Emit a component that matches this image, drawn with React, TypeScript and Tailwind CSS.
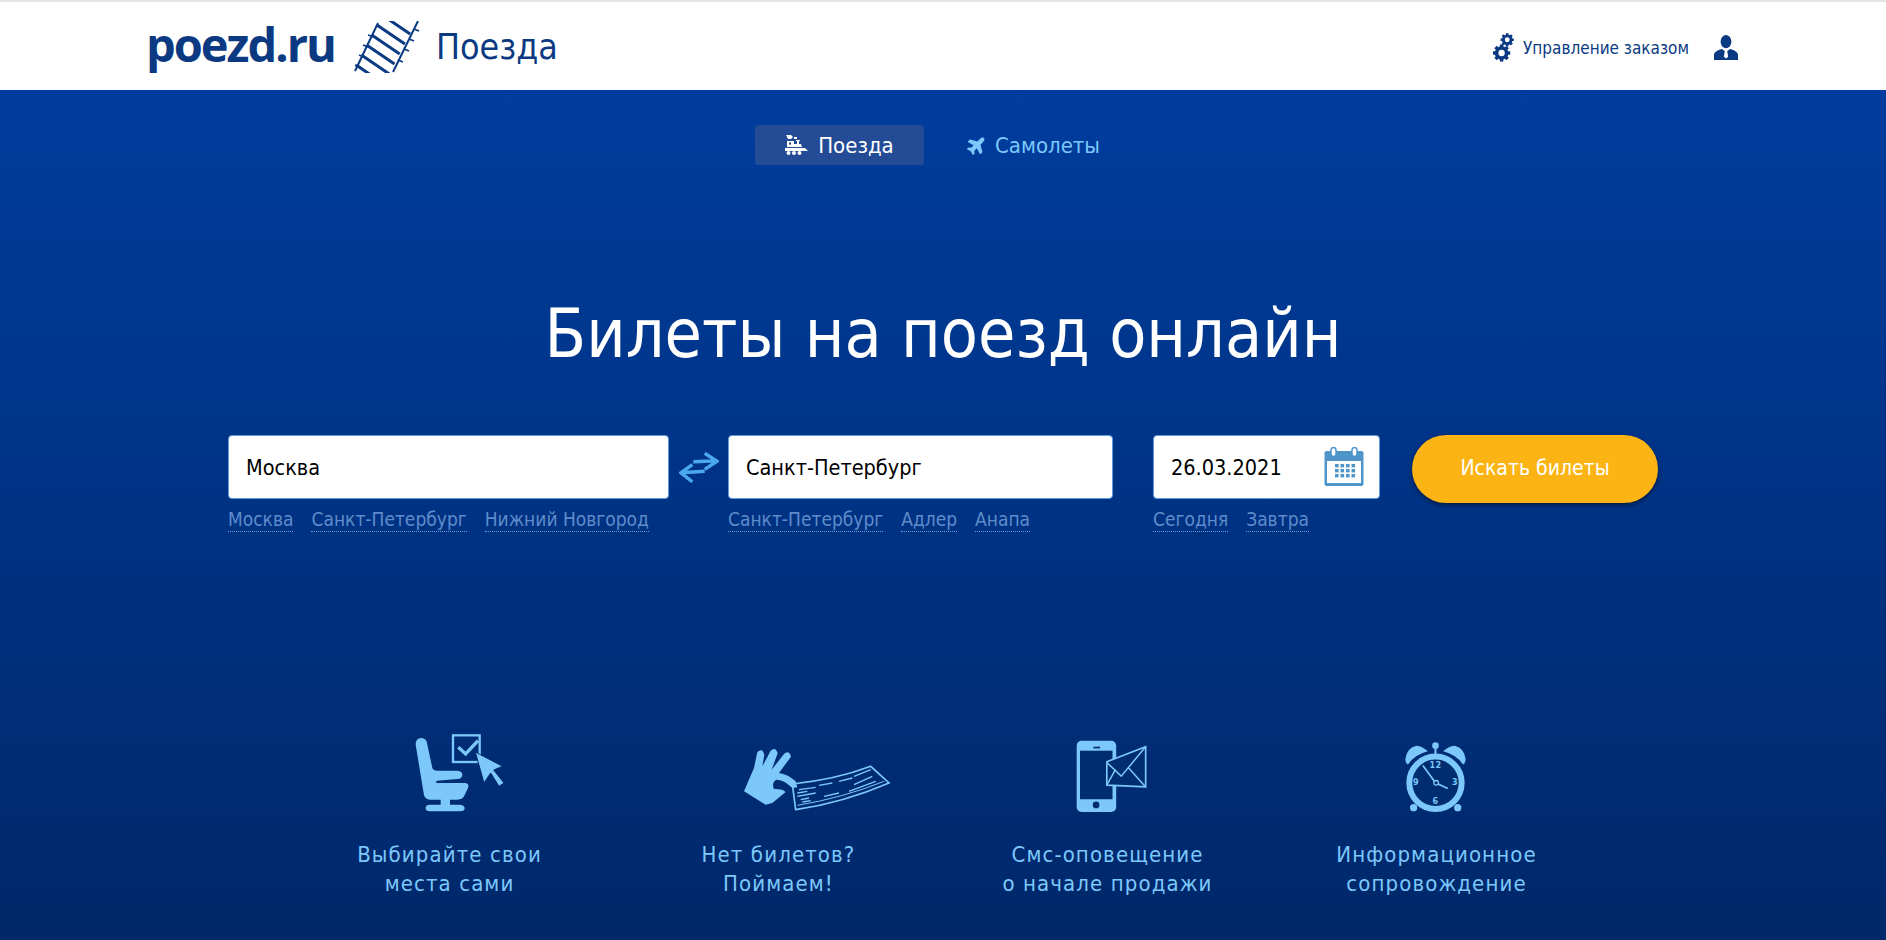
import { FaPlane } from "react-icons/fa";

const font = { fontFamily: '"DejaVu Sans Condensed", "DejaVu Sans", sans-serif' };
const sky = "#7cc8fb";
const navy = "#0b3a82";
const dark = "#002c70";

function RailIcon() {
  const starts = [-6, 4, 14, 24, 34, 44];
  return (
    <svg width="66" height="52" viewBox="0 0 66 52" fill="none" stroke={navy} strokeWidth="2">
      <path d="M24 2L1 50" />
      <path d="M64 0L39 51" />
      {starts.map((y) => {
        const x = 25 - 0.52 * y;
        return <path key={y} d={`M${x} ${y}L${x + 28} ${y + 19}`} strokeWidth="3" />;
      })}
      <path d="M14 14l6 2M9 24l5 2M5 34l5 2M1 44l5 2M60 8l5 2M55 18l5 2M50 28l5 2M44 39l5 2" strokeWidth="1.800" />
    </svg>
  );
}

function Gear({ size, x, y }: { size: number; x: number; y: number }) {
  const teeth = [0, 45, 90, 135];
  return (
    <g transform={`translate(${x} ${y})`}>
      {teeth.map((a) => (
        <rect key={a} x={-size * 0.2} y={-size} width={size * 0.4} height={size * 2} transform={`rotate(${a})`} fill={navy} />
      ))}
      <circle r={size * 0.58} fill="#fff" stroke={navy} strokeWidth={size * 0.42} />
    </g>
  );
}

function GearsIcon() {
  return (
    <svg width="21" height="29" viewBox="0 0 21 29">
      <Gear size={8.6} x={8.6} y={20} />
      <Gear size={6.6} x={14.2} y={6.8} />
    </svg>
  );
}

function UserIcon() {
  return (
    <svg width="24" height="25" viewBox="0 0 24 25" fill={navy}>
      <ellipse cx="12" cy="6.600" rx="5.400" ry="6.600" />
      <path d="M0 25v-5c0-3 3-4.600 8-6l2.800 2.200-1 5.600 2.200 1.800 2.200-1.800-1-5.600L16 14c5 1.400 8 3 8 6v5z" />
    </svg>
  );
}

function TrainIcon() {
  return (
    <svg width="23" height="20" viewBox="0 0 23 20" fill="#fff">
      <path d="M1 0h5l2 2-2 2H3zM9 2h3v2H9z" />
      <path d="M2 6h7v3h3V6h-1V5h4v1h-1v3h2l1 3H2z" />
      <path d="M0 13h20l3 3H0z" />
      <circle cx="3.500" cy="18" r="2" />
      <circle cx="9" cy="18" r="2" />
      <circle cx="14.500" cy="18" r="2" />
      <rect x="4" y="7.500" width="2" height="2" fill="#234b96" />
    </svg>
  );
}

function SwapIcon() {
  return (
    <svg width="40" height="31" viewBox="0 0 42 32" fill="none" stroke="#4aa8ec" strokeWidth="3.600">
      <path d="M15 10L40 9M27 1L40 9.500 27 18" />
      <path d="M2 21.500L27 20M14 13L2 21.500 14 31" />
    </svg>
  );
}

function CalendarIcon() {
  return (
    <svg width="40" height="40" viewBox="0 0 40 40">
      <rect x="0.500" y="4" width="39" height="35" rx="2" fill="#4e95c9" />
      <rect x="3" y="14" width="34" height="22" fill="#fff" />
      <rect x="7" y="0.500" width="5" height="9" rx="2.500" fill="#fff" stroke="#4e95c9" strokeWidth="1.500" />
      <rect x="28" y="0.500" width="5" height="9" rx="2.500" fill="#fff" stroke="#4e95c9" strokeWidth="1.500" />
      <g fill="#4e95c9">
        {[11, 16.500, 22, 27.500].map((x) =>
          [17, 22, 27].map((y) => <rect key={`${x}-${y}`} x={x} y={y} width="3.600" height="3.400" />),
        )}
      </g>
    </svg>
  );
}

function SeatIcon() {
  return (
    <svg width="92" height="80" viewBox="70 35 276 240" fill={sky}>
      <path d="M75 70Q75 50 92 50 108 50 110 70L125 140Q128 148 140 148L200 148Q215 150 215 160 215 172 200 173L140 178Q130 183 140 185L225 185Q237 187 232 200L220 225Q215 235 200 235L178 235 178 250 208 250Q222 252 222 260 222 270 208 270L118 270Q105 270 105 260 105 250 118 250L150 250 150 235 118 235Q105 235 100 222Z" />
      <rect x="187" y="42" width="80" height="80" fill="none" stroke={sky} strokeWidth="7" />
      <path d="M203 78L225 98 262 58" fill="none" stroke={sky} strokeWidth="10" />
      <path d="M254 92L336 135 309 146 340 185 325 195 300 155 280 185Z" stroke={dark} strokeWidth="3" />
    </svg>
  );
}

function TicketIcon() {
  return (
    <svg width="150" height="65" viewBox="45 60 450 195" fill="none" stroke={sky}>
      <path d="M190 168Q320 155 425 115L480 165Q340 225 200 245Z" strokeWidth="5" />
      <path d="M205 232Q340 210 465 160" strokeWidth="3" />
      <path
        d="M210 185L260 178M270 172L310 165M330 160L370 150M375 145L425 125M205 195L235 190M205 205L260 195M215 215L240 210M220 222L245 218M285 205L330 195M360 190L440 160M375 170L430 145"
        strokeWidth="4"
      />
      <path
        d="M45 190L75 120 85 72Q100 58 106 80L100 115 125 68Q140 55 146 76L128 125 165 78Q180 65 186 86L150 135Q175 138 200 160L205 178 190 180Q165 155 142 155 128 162 134 182L160 185 170 192 130 225 110 230Z"
        fill={sky}
        stroke="none"
      />
    </svg>
  );
}

function PhoneIcon() {
  return (
    <svg width="71" height="73" viewBox="80 40 212 218">
      <rect x="82" y="42" width="118" height="213" rx="15" fill={sky} />
      <rect x="92" y="72" width="97" height="145" fill={dark} />
      <rect x="132" y="60" width="20" height="5" fill={dark} />
      <circle cx="140" cy="234" r="10" fill={dark} />
      <path d="M172 105L288 60 288 180 172 175Z" fill={dark} stroke={sky} strokeWidth="5" />
      <path d="M172 107L215 148 288 60M172 175L198 128M288 180L236 122" fill="none" stroke={sky} strokeWidth="4.500" />
    </svg>
  );
}

function ClockIcon() {
  return (
    <svg width="63" height="73" viewBox="65 42 190 218" fill={sky}>
      <circle cx="163" cy="58" r="10" />
      <rect x="160" y="60" width="6" height="25" />
      <path d="M72 100Q75 65 105 58 125 60 140 75 100 85 80 115 72 110 72 100Z" />
      <path d="M254 100Q251 65 221 58 201 60 186 75 226 85 246 115 254 110 254 100Z" />
      <circle cx="97" cy="245" r="11" />
      <circle cx="230" cy="245" r="11" />
      <circle cx="163" cy="170" r="79" fill={dark} stroke={sky} strokeWidth="18" />
      <path d="M125 118L163 170 200 187" fill="none" stroke={sky} strokeWidth="5" />
      <circle cx="165" cy="170" r="7" fill={dark} stroke={sky} strokeWidth="4" />
      <g fontSize="27" fontWeight="700" textAnchor="middle">
        <text x="163" y="124">12</text>
        <text x="104" y="178">9</text>
        <text x="222" y="178">3</text>
        <text x="163" y="233">6</text>
      </g>
    </svg>
  );
}

function Hints({ items }: { items: string[] }) {
  return (
    <div className="mt-[8px] flex gap-[18px] text-[19px] leading-[24px] text-[#5f8ccb]">
      {items.map((item) => (
        <a key={item} className="border-b border-dotted border-[#6f9ad6]">
          {item}
        </a>
      ))}
    </div>
  );
}

function Field({ value, width, hints, icon }: { value: string; width: string; hints: string[]; icon?: boolean }) {
  return (
    <div className={width}>
      <div className="flex h-[64px] items-center justify-between rounded-[4px] border border-[#5f9bdc] bg-white pl-[17px] pr-[15px] text-[21.500px] text-black">
        <span className="pt-[2px]">{value}</span>
        {icon && <CalendarIcon />}
      </div>
      <Hints items={hints} />
    </div>
  );
}

const features = [
  { icon: <SeatIcon />, shift: "ml-[20px]", lines: ["Выбирайте свои", "места сами"] },
  { icon: <TicketIcon />, shift: "ml-[81px]", lines: ["Нет билетов?", "Поймаем!"] },
  { icon: <PhoneIcon />, shift: "ml-[8px]", lines: ["Смс-оповещение", "о начале продажи"] },
  { icon: <ClockIcon />, shift: "mr-[4px]", lines: ["Информационное", "сопровождение"] },
];

export default function App() {
  return (
    <div className="flex h-[940px] flex-col overflow-hidden" style={font}>
      <header className="flex h-[90px] items-center justify-between border-t-2 border-[#e4e4e4] bg-white pl-[146px] pr-[148px]">
        <div className="flex items-center">
          <span className="pb-[4px] text-[47px] font-bold leading-none tracking-[-2px] text-[#0b3a82]" style={{ fontFamily: '"Open Sans", sans-serif' }}>
            poezd.ru
          </span>
          <span className="ml-[19px] pt-[2px]">
            <RailIcon />
          </span>
          <span className="ml-[16px] pt-[1px] text-[35.500px] text-[#0b3a82]">Поезда</span>
        </div>
        <div className="flex items-center pt-[3px] text-[#0b3a82]">
          <GearsIcon />
          <span className="ml-[9px] pt-[2px] text-[17px]">Управление заказом</span>
          <span className="ml-[25px]">
            <UserIcon />
          </span>
        </div>
      </header>
      <main className="flex flex-1 flex-col items-center bg-gradient-to-b from-[#003d9e] to-[#00286a]">
        <nav className="mt-[35px] flex gap-[8px] text-[22px]">
          <a className="flex h-[40px] w-[169px] items-center justify-center gap-[10px] rounded-[3px] bg-[#234b96] text-white">
            <TrainIcon />
            Поезда
          </a>
          <a className="flex h-[40px] items-center gap-[8px] pl-[35px] pr-[31px] text-[#7cc8fb]">
            <FaPlane size={20} className="-rotate-45" />
            Самолеты
          </a>
        </nav>
        <h1 className="mt-[127px] text-[67.600px] font-normal leading-[84px] text-white">Билеты на поезд онлайн</h1>
        <div className="mt-[59px] flex items-start">
          <Field value="Москва" width="w-[441px]" hints={["Москва", "Санкт-Петербург", "Нижний Новгород"]} />
          <div className="flex h-[64px] w-[59px] items-center justify-center">
            <SwapIcon />
          </div>
          <Field value="Санкт-Петербург" width="w-[385px]" hints={["Санкт-Петербург", "Адлер", "Анапа"]} />
          <div className="ml-[40px]">
            <Field value="26.03.2021" width="w-[227px]" hints={["Сегодня", "Завтра"]} icon />
          </div>
          <button className="ml-[32px] h-[68px] w-[246px] rounded-[34px] bg-[#fbb414] text-[21px] text-white shadow-[0_2px_4px_rgba(0,0,0,0.5)]">
            Искать билеты
          </button>
        </div>
        <div className="mt-[197px] grid w-[1316px] grid-cols-4">
          {features.map((f) => (
            <div key={f.lines[0]} className="flex flex-col items-center text-[22px] leading-[29px] tracking-[1.100px] text-[#7cc8fb]">
              <div className={`mb-[27px] flex h-[84px] items-end ${f.shift}`}>{f.icon}</div>
              {f.lines.map((line) => (
                <div key={line}>{line}</div>
              ))}
            </div>
          ))}
        </div>
      </main>
    </div>
  );
}
